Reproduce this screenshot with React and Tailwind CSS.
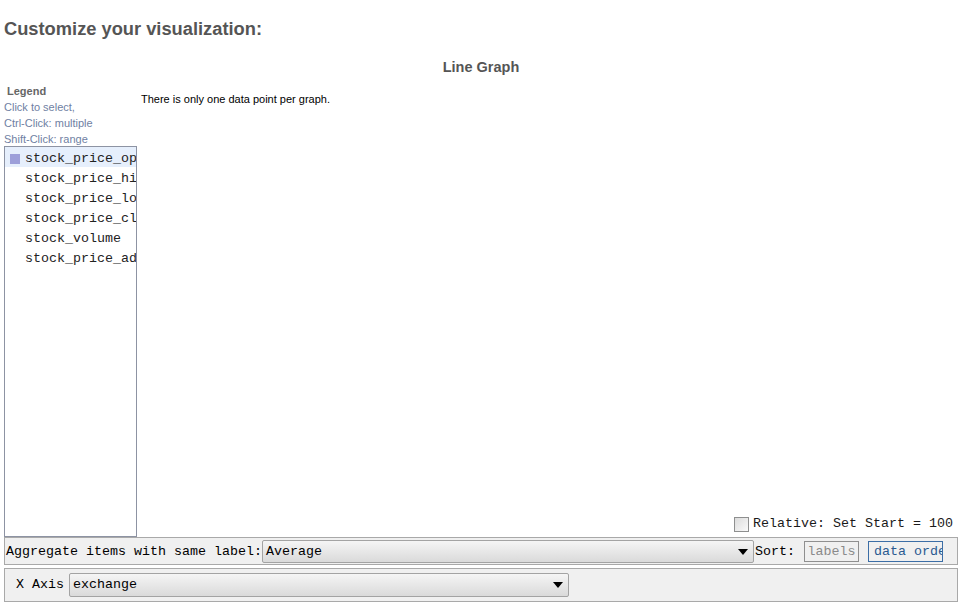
const legendItems = [
  'stock_price_open',
  'stock_price_high',
  'stock_price_low',
  'stock_price_close',
  'stock_volume',
  'stock_price_adj_close',
];

const mono = { fontFamily: '"Liberation Mono", "DejaVu Sans Mono", monospace' };

const Select = ({ value, className }) => (
  <div
    className={`flex items-center justify-between border border-[#a3a3a3] rounded-[2px] bg-gradient-to-b from-[#f5f5f5] to-[#dadada] pl-[3px] pr-[5px] text-[13.33px] text-black ${className}`}
    style={mono}
  >
    <span>{value}</span>
    <svg width="10" height="6" viewBox="0 0 10 6">
      <path d="M0 0 L10 0 L5 6 Z" fill="#000" />
    </svg>
  </div>
);

const App = () => {
  return (
    <div className="w-[962px] h-[607px] bg-white font-['Liberation_Sans',Arial,sans-serif] overflow-hidden">
      <h1 className="pt-[18px] pl-[4px] text-[18.3px] leading-[22px] font-bold text-[#555]">
        Customize your visualization:
      </h1>

      <div className="mt-[19px] text-center text-[14.5px] leading-[17px] font-bold text-[#555]">Line Graph</div>

      <div className="flex pl-[4px] mt-[7px]">
        <div className="w-[133px] flex flex-col">
          <div className="text-[11px] leading-[16px] font-bold text-[#666] pl-[3px]">Legend</div>
          <div className="text-[11px] leading-[16px] text-[#6f7fa3]">Click to select,</div>
          <div className="text-[11px] leading-[16px] text-[#6f7fa3]">Ctrl-Click: multiple</div>
          <div className="text-[11px] leading-[16px] text-[#6f7fa3]">Shift-Click: range</div>
          <div className="mt-[-1px] h-[391px] border border-[#8d93a3] bg-white overflow-hidden" style={mono}>
            {legendItems.map((item, i) => (
              <div
                key={item}
                className={`flex items-center h-[20px] pl-[5px] pt-[3px] whitespace-nowrap text-[13.33px] text-[#222] ${
                  i === 0 ? 'bg-[#e6effc]' : ''
                }`}
              >
                <span className={`w-[10px] h-[10px] mr-[5px] shrink-0 ${i === 0 ? 'bg-[#9d9fd9]' : ''}`}></span>
                {item}
              </div>
            ))}
          </div>
        </div>

        <div className="flex-1 flex flex-col pl-[4px]">
          <div className="mt-[9px] text-[11px] leading-[14px] text-black">There is only one data point per graph.</div>
          <div className="mt-auto flex items-center justify-end pr-[9px] pb-[5px]">
            <span className="w-[15px] h-[15px] border border-[#8e8f8f] bg-gradient-to-br from-[#dcdcdc] to-[#fafafa] mr-[4px]"></span>
            <span className="text-[13.33px] leading-[16px] text-[#1a1a1a]" style={mono}>
              Relative: Set Start = 100
            </span>
          </div>
        </div>
      </div>

      <div className="ml-[4px] w-[954px] h-[28px] border border-[#a9a9a9] bg-[#f0f0f0] flex items-center pl-[1px] pt-[1px]" style={mono}>
        <span className="text-[13.33px] text-black whitespace-nowrap">Aggregate items with same label:</span>
        <Select value="Average" className="w-[492px] h-[23px]" />
        <span className="ml-[1px] text-[13.33px] text-black">Sort:</span>
        <span className="ml-[9px] h-[21px] w-[55px] border border-[#8f8f8f] flex items-center justify-center text-[13.33px] text-[#8a8a8a] overflow-hidden">
          labels
        </span>
        <span className="ml-[9px] h-[21px] w-[75px] border border-[#3c6ea6] flex items-center pl-[5px] text-[13.33px] text-[#2a5a90] overflow-hidden whitespace-nowrap">
          data order
        </span>
      </div>

      <div className="mt-[3px] ml-[4px] w-[954px] h-[34px] border border-[#a9a9a9] bg-[#f0f0f0] flex items-center pl-[11px]" style={mono}>
        <span className="text-[13.33px] text-black mr-[5px]">X Axis</span>
        <Select value="exchange" className="w-[500px] h-[24px]" />
      </div>
    </div>
  );
};

export default App;
